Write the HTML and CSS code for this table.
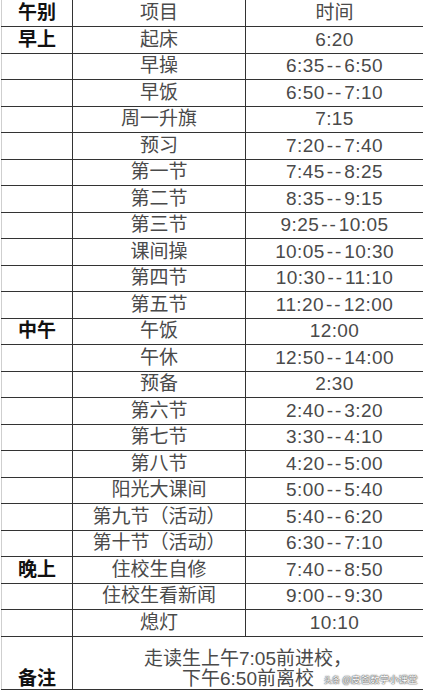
FILE: index.html
```html
<!DOCTYPE html>
<html lang="zh-CN">
<head>
<meta charset="utf-8">
<title>作息时间表</title>
<link rel="stylesheet" href="styles.css">
</head>
<body>
<div class="sheet">
<table class="schedule">
<colgroup><col class="c1"><col class="c2"><col class="c3"></colgroup>
<tbody>
<tr class="head"><td class="period">午别</td><td>项目</td><td>时间</td></tr>
<tr><td class="period">早上</td><td>起床</td><td class="num">6:20</td></tr>
<tr><td class="period"></td><td>早操</td><td class="num">6:35<span class="dash">--</span>6:50</td></tr>
<tr><td class="period"></td><td>早饭</td><td class="num">6:50<span class="dash">--</span>7:10</td></tr>
<tr><td class="period"></td><td>周一升旗</td><td class="num">7:15</td></tr>
<tr><td class="period"></td><td>预习</td><td class="num">7:20<span class="dash">--</span>7:40</td></tr>
<tr><td class="period"></td><td>第一节</td><td class="num">7:45<span class="dash">--</span>8:25</td></tr>
<tr><td class="period"></td><td>第二节</td><td class="num">8:35<span class="dash">--</span>9:15</td></tr>
<tr><td class="period"></td><td>第三节</td><td class="num">9:25<span class="dash">--</span>10:05</td></tr>
<tr><td class="period"></td><td>课间操</td><td class="num">10:05<span class="dash">--</span>10:30</td></tr>
<tr><td class="period"></td><td>第四节</td><td class="num">10:30<span class="dash">--</span>11:10</td></tr>
<tr><td class="period"></td><td>第五节</td><td class="num">11:20<span class="dash">--</span>12:00</td></tr>
<tr><td class="period">中午</td><td>午饭</td><td class="num">12:00</td></tr>
<tr><td class="period"></td><td>午休</td><td class="num">12:50<span class="dash">--</span>14:00</td></tr>
<tr><td class="period"></td><td>预备</td><td class="num">2:30</td></tr>
<tr><td class="period"></td><td>第六节</td><td class="num">2:40<span class="dash">--</span>3:20</td></tr>
<tr><td class="period"></td><td>第七节</td><td class="num">3:30<span class="dash">--</span>4:10</td></tr>
<tr><td class="period"></td><td>第八节</td><td class="num">4:20<span class="dash">--</span>5:00</td></tr>
<tr><td class="period"></td><td>阳光大课间</td><td class="num">5:00<span class="dash">--</span>5:40</td></tr>
<tr><td class="period"></td><td>第九节（活动）</td><td class="num">5:40<span class="dash">--</span>6:20</td></tr>
<tr><td class="period"></td><td>第十节（活动）</td><td class="num">6:30<span class="dash">--</span>7:10</td></tr>
<tr><td class="period">晚上</td><td>住校生自修</td><td class="num">7:40<span class="dash">--</span>8:50</td></tr>
<tr><td class="period"></td><td>住校生看新闻</td><td class="num">9:00<span class="dash">--</span>9:30</td></tr>
<tr><td class="period"></td><td>熄灯</td><td class="num">10:10</td></tr>
<tr class="note"><td class="period note-label">备注</td><td colspan="2" class="note-text">走读生上午7:05前进校，<br>下午6:50前离校</td></tr>
</tbody>
</table>
<div class="watermark"><span class="wm-logo">头条</span> @皮爸数学小课堂</div>
</div>
</body>
</html>
```

FILE: styles.css
```css
html, body {
  margin: 0;
  padding: 0;
  background: #ffffff;
}

.sheet {
  position: relative;
  width: 423px;
  height: 695px;
  overflow: hidden;
}

.schedule {
  border-collapse: collapse;
  table-layout: fixed;
  width: 422px;
  margin: -1px 0 0 1px;
  font-family: "Liberation Sans", "Noto Sans CJK SC", sans-serif;
  font-size: 19px;
  color: #4a4a4a;
}

.c1 { width: 71px; }
.c2 { width: 173px; }
.c3 { width: 178px; }

.schedule td {
  box-sizing: border-box;
  height: 26.5px;
  padding: 0;
  border: 1px solid #333333;
  text-align: center;
  vertical-align: middle;
  line-height: 20px;
  white-space: nowrap;
}

.schedule tr.head td {
  height: 27px;
}

.schedule td:first-child {
  border-left-color: #cfcfcf;
}

.schedule td.period {
  font-weight: bold;
  color: #111111;
}

.schedule td.num {
  letter-spacing: 0.4px;
}

.dash {
  padding: 0 1px 0 2px;
  letter-spacing: 2px;
}

.schedule tr.note td {
  height: 53.5px;
  vertical-align: bottom;
}

.note-text {
  line-height: 27px;
}

.watermark {
  position: absolute;
  left: 324px;
  top: 673px;
  font-family: "Noto Sans CJK SC", sans-serif;
  font-size: 9.5px;
  line-height: 13px;
  color: #ffffff;
  text-shadow: 0 0 1px #555, 0 0 1px #555, 0 0 2px #777;
  white-space: nowrap;
}

.wm-logo {
  font-size: 8px;
}
```
